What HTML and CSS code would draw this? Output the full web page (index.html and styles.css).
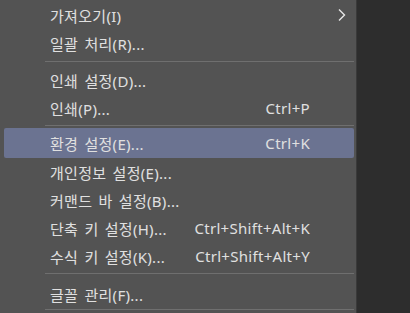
FILE: index.html
```html
<!DOCTYPE html>
<html lang="ko">
<head>
<meta charset="utf-8">
<link rel="stylesheet" href="styles.css">
</head>
<body>
<div class="menu">
  <div class="item"><span class="label">가져오기(I)</span><span class="key"></span><svg class="arrow" width="8" height="14" viewBox="0 0 8 14"><path d="M1 1.5 L6.5 7 L1 12.5" fill="none" stroke="#e6e6e6" stroke-width="1.4"/></svg></div>
  <div class="item"><span class="label">일괄 처리(R)...</span></div>
  <div class="sep sep-a"></div>
  <div class="item"><span class="label">인쇄 설정(D)...</span></div>
  <div class="item"><span class="label">인쇄(P)...</span><span class="key">Ctrl+P</span></div>
  <div class="sep sep-b"></div>
  <div class="item active"><span class="label">환경 설정(E)...</span><span class="key">Ctrl+K</span></div>
  <div class="item"><span class="label">개인정보 설정(E)...</span></div>
  <div class="item"><span class="label">커맨드 바 설정(B)...</span></div>
  <div class="item"><span class="label">단축 키 설정(H)...</span><span class="key">Ctrl+Shift+Alt+K</span></div>
  <div class="item"><span class="label">수식 키 설정(K)...</span><span class="key">Ctrl+Shift+Alt+Y</span></div>
  <div class="sep sep-c"></div>
  <div class="item"><span class="label">글꼴 관리(F)...</span></div>
  <div class="sep sep-d"></div>
</div>
</body>
</html>
```
FILE: styles.css
```css
html, body {
  margin: 0;
  padding: 0;
  background: #2d2d2d;
  height: 100%;
  overflow: hidden;
}
.menu {
  width: 357px;
  height: 313px;
  background: #535353;
  border-right: 1px solid #3a3a3a;
  padding-top: 1px;
  box-sizing: border-box;
  font-family: "Noto Sans", "Noto Sans CJK KR", sans-serif;
  font-size: 15px;
  color: #e0e0e0;
}
.item {
  display: grid;
  grid-template-columns: 1fr auto 46px;
  align-items: center;
  height: 28px;
  margin: 0 2px 0 4px;
  padding-left: 46px;
  border-radius: 2px;
  white-space: nowrap;
}
.label {
  letter-spacing: 0.3px;
  word-spacing: 2px;
}
.key {
  text-align: right;
  margin-right: -2px;
  letter-spacing: 0.3px;
}
.arrow {
  justify-self: start;
  margin-left: 30px;
}
.active {
  height: 30px;
  background: #6b7391;
}
.sep {
  height: 1px;
  background: #6f6f6f;
  margin-left: 45px;
  margin-right: 2px;
}
.sep-a { margin-top: 4px; margin-bottom: 4px; }
.sep-b { margin-top: 3px; margin-bottom: 2px; }
.sep-c { margin-top: 3px; margin-bottom: 6px; }
.sep-d { margin-top: 1px; }
```
